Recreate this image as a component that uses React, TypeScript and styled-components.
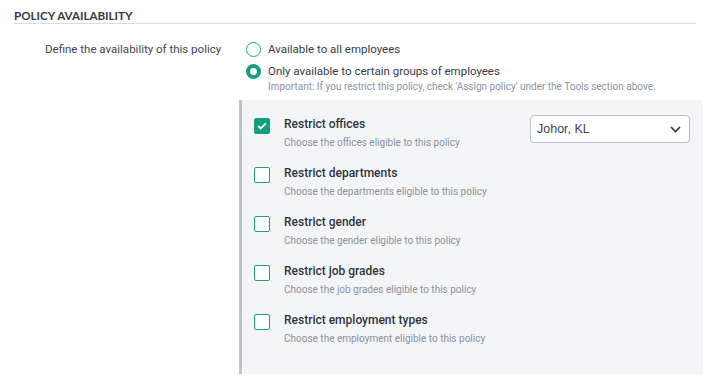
import React from "react";
import styled, { createGlobalStyle } from "styled-components";

const GlobalStyle = createGlobalStyle`
  html, body {
    margin: 0;
    padding: 0;
    background: #ffffff;
    font-family: Roboto, "Noto Sans", Arial, sans-serif;
  }
`;

const Page = styled.div`
  padding: 0 14px;
  width: 722px;
  box-sizing: border-box;
`;

const SectionTitle = styled.h2`
  margin: 0;
  width: 682px;
  padding-top: 9px;
  height: 14px;
  line-height: 14px;
  font-family: Lato, Roboto, sans-serif;
  font-size: 11.6px;
  font-weight: 700;
  color: #343a47;
  text-transform: uppercase;
  border-bottom: 1px solid #d9dce1;
`;

const FieldRow = styled.div`
  display: flex;
  padding-top: 17px;
`;

const FieldLabel = styled.div`
  width: 225px;
  flex-shrink: 0;
  padding-left: 31px;
  box-sizing: border-box;
  font-size: 11.5px;
  line-height: 16px;
  color: #414753;
`;

const FieldBody = styled.div`
  flex: 1;
  display: flex;
  flex-direction: column;
`;

const RadioOption = styled.label<{ $first?: boolean }>`
  display: flex;
  align-items: center;
  gap: 7px;
  padding-left: 7px;
  height: 22px;
  font-size: 11.5px;
  color: #373c48;
  margin-top: ${(p) => (p.$first ? "-3px" : "0")};
`;

const RadioDot = styled.span<{ $on?: boolean }>`
  width: 15px;
  height: 15px;
  box-sizing: border-box;
  border-radius: 50%;
  border: ${(p) => (p.$on ? "4.5px solid #139e7f" : "1.5px solid #1ba386")};
  background: #fff;
  flex-shrink: 0;
`;

const Note = styled.div`
  padding-left: 29px;
  font-size: 10px;
  line-height: 14px;
  color: #8c94a2;
  margin-top: -2px;
`;

const Panel = styled.div`
  margin-top: 6px;
  width: 464px;
  height: 274px;
  box-sizing: border-box;
  background: #f4f5f7;
  border-left: 3px solid #bcc3cd;
  padding: 16px 13px 0 12px;
  display: flex;
  flex-direction: column;
  gap: 15px;
`;

const RestrictRow = styled.div`
  display: flex;
  align-items: flex-start;
  gap: 14px;
`;

const Box = styled.span<{ $on?: boolean }>`
  margin-top: 2px;
  width: 16px;
  height: 16px;
  box-sizing: border-box;
  border-radius: 2px;
  border: 1.5px solid #17a084;
  background: ${(p) => (p.$on ? "#139e7f" : "#ffffff")};
  display: flex;
  align-items: center;
  justify-content: center;
  flex-shrink: 0;
`;

const RowText = styled.div`
  flex: 1;
  display: flex;
  flex-direction: column;
`;

const RowTitle = styled.div`
  font-size: 12px;
  line-height: 16px;
  font-weight: 500;
  color: #30353f;
`;

const RowHint = styled.div`
  margin-top: 4px;
  font-size: 10px;
  line-height: 14px;
  color: #8a92a0;
`;

const Select = styled.div`
  margin-top: -1px;
  width: 160px;
  height: 28px;
  box-sizing: border-box;
  border: 1px solid #b9c0cb;
  border-radius: 4px;
  background: #fff;
  display: flex;
  align-items: center;
  justify-content: space-between;
  padding: 0 8px 0 6px;
  font-family: "Liberation Sans", Arial, sans-serif;
  font-size: 12.5px;
  color: #404653;
`;

const rows = [
  { title: "Restrict offices", hint: "Choose the offices eligible to this policy", on: true },
  { title: "Restrict departments", hint: "Choose the departments eligible to this policy" },
  { title: "Restrict gender", hint: "Choose the gender eligible to this policy" },
  { title: "Restrict job grades", hint: "Choose the job grades eligible to this policy" },
  { title: "Restrict employment types", hint: "Choose the employment eligible to this policy" },
];

const Check = () => (
  <svg width="10" height="8" viewBox="0 0 10 8">
    <polyline points="1.2,4 3.8,6.4 8.8,1.4" fill="none" stroke="#fff" strokeWidth="1.8" />
  </svg>
);

const Chevron = () => (
  <svg width="11" height="7" viewBox="0 0 11 7">
    <polyline points="1,1 5.5,5.5 10,1" fill="none" stroke="#2c3445" strokeWidth="1.6" />
  </svg>
);

export default function App() {
  return (
    <>
      <GlobalStyle />
      <Page>
        <SectionTitle>Policy availability</SectionTitle>
        <FieldRow>
          <FieldLabel>Define the availability of this policy</FieldLabel>
          <FieldBody>
            <RadioOption $first>
              <RadioDot />
              Available to all employees
            </RadioOption>
            <RadioOption>
              <RadioDot $on />
              Only available to certain groups of employees
            </RadioOption>
            <Note>
              Important: If you restrict this policy, check 'Assign policy' under the Tools section above.
            </Note>
            <Panel>
              {rows.map((r) => (
                <RestrictRow key={r.title}>
                  <Box $on={r.on}>{r.on && <Check />}</Box>
                  <RowText>
                    <RowTitle>{r.title}</RowTitle>
                    <RowHint>{r.hint}</RowHint>
                  </RowText>
                  {r.on && (
                    <Select>
                      Johor, KL
                      <Chevron />
                    </Select>
                  )}
                </RestrictRow>
              ))}
            </Panel>
          </FieldBody>
        </FieldRow>
      </Page>
    </>
  );
}
